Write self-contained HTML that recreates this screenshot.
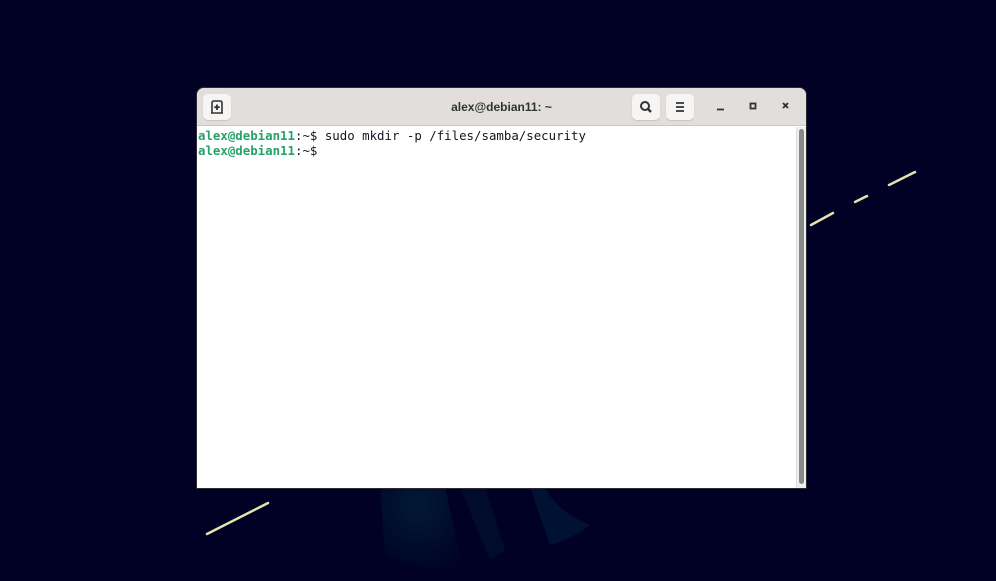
<!DOCTYPE html>
<html><head><meta charset="utf-8"><style>
*{margin:0;padding:0;box-sizing:border-box}
body{width:996px;height:581px;overflow:hidden;background:#000125;position:relative;font-family:"Liberation Sans",sans-serif}
.win{position:absolute;left:197px;top:88px;width:609px;height:400px;background:#fff;border-radius:7px 7px 0 0;overflow:hidden;box-shadow:0 0 0 1px #2a2a35}
.tb{height:38px;background:#e1dedb;border-bottom:1px solid #cdc7c2;position:relative}
.btn{position:absolute;top:6px;width:28px;height:26px;background:#f6f5f4;border-radius:5px;box-shadow:0 1px 1px rgba(0,0,0,.12)}
.title{position:absolute;left:0;right:0;top:12px;text-align:center;font-size:12px;font-weight:bold;color:#2e3436}
.term{font-family:"DejaVu Sans Mono",monospace;font-size:12.4px;line-height:15px;color:#171421;padding:2px 0 0 1px;white-space:pre}
.g{color:#26a269;font-weight:bold}
.sb{position:absolute;left:599px;top:39px;width:10px;height:361px;background:#f0efee;border-left:1px solid #ddd}
.sb div{position:absolute;left:2px;top:2px;width:5px;height:355px;background:#888a89;border-radius:3px}
</style></head><body>
<svg width="996" height="581" style="position:absolute;left:0;top:0">
<defs><radialGradient id="rg" cx="0.45" cy="0.2" r="0.8"><stop offset="0" stop-color="#02243d"/><stop offset="1" stop-color="#000125"/></radialGradient></defs>
<path d="M380 487 L385 555 Q420 570 465 578 L445 487Z" fill="url(#rg)" opacity=".7"/>
<path d="M460 487 L490 560 L505 550 L485 487Z" fill="#011633" opacity=".5"/>
<path d="M530 487 L550 545 Q570 540 590 525 Q555 510 545 487Z" fill="#02223d" opacity=".5"/>
<g stroke="#e6e3b0" stroke-width="2.5" stroke-linecap="round">
<line x1="811" y1="225" x2="833" y2="213"/><line x1="855" y1="202" x2="867" y2="196"/><line x1="889" y1="185" x2="915" y2="172"/><line x1="207" y1="534" x2="268" y2="503"/>
</g></svg>
<div class="win">
<div class="tb">
<div class="btn" style="left:6px"><svg width="28" height="26"><path d="M9 19V9Q9 7 11 7H17Q19 7 19 9V19" fill="none" stroke="#2e3436" stroke-width="1.6"/><line x1="8" y1="19" x2="20" y2="19" stroke="#2e3436" stroke-width="1.6"/><path d="M14 10.5V16M11.3 13.2H16.7" stroke="#2e3436" stroke-width="1.8"/></svg></div>
<div class="title">alex@debian11: ~</div>
<div class="btn" style="left:435px"><svg width="28" height="26"><circle cx="13" cy="12" r="4" fill="none" stroke="#2e3436" stroke-width="2"/><line x1="16" y1="15" x2="19" y2="18" stroke="#2e3436" stroke-width="2.4"/></svg></div>
<div class="btn" style="left:469px"><svg width="28" height="26"><path d="M10 9H18M10 13H18M10 17H18" stroke="#2e3436" stroke-width="1.8"/></svg></div>
<svg width="100" height="38" style="position:absolute;left:509px;top:0"><line x1="11" y1="21.5" x2="18" y2="21.5" stroke="#2e3436" stroke-width="1.8"/><rect x="44.5" y="15.5" width="5" height="5" fill="none" stroke="#2e3436" stroke-width="1.8"/><path d="M77 15L82 20M82 15L77 20" stroke="#2e3436" stroke-width="1.9"/></svg>
</div>
<div class="term"><span class="g">alex@debian11</span>:~$ sudo mkdir -p /files/samba/security
<span class="g">alex@debian11</span>:~$ </div>
<div class="sb"><div></div></div>
</div>
</body></html>
